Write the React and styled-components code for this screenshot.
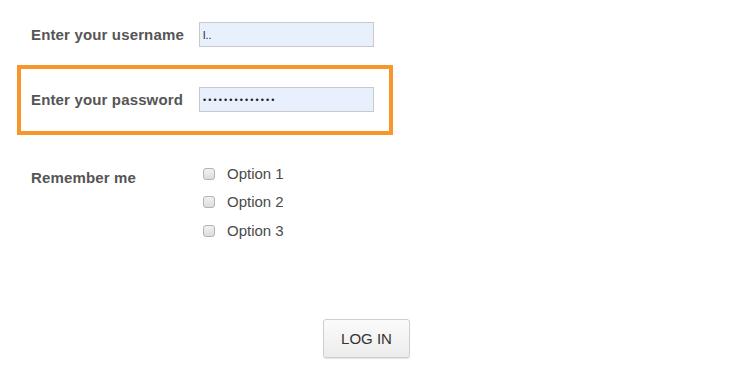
import React from 'react';
import styled, { createGlobalStyle } from 'styled-components';

const GlobalStyle = createGlobalStyle`
  html, body {
    margin: 0;
    padding: 0;
    background: #fff;
    font-family: "Liberation Sans", Arial, Helvetica, sans-serif;
  }
`;

const Page = styled.form`
  width: 730px;
  height: 388px;
  box-sizing: border-box;
  padding: 22px 0 0 17px;
  display: flex;
  flex-direction: column;
`;

const Field = styled.div`
  display: grid;
  grid-template-columns: 168px 175px;
  align-items: center;
  box-sizing: border-box;
  width: ${p => (p.highlight ? '376px' : 'auto')};
  padding: ${p => (p.highlight ? '18px 10px 19px' : '0 0 0 14px')};
  margin-top: ${p => (p.highlight ? '18px' : '0')};
  border: ${p => (p.highlight ? '4px solid #f8962c' : 'none')};
`;

const Label = styled.label`
  font-size: 15px;
  font-weight: bold;
  letter-spacing: 0.15px;
  color: #555;
  white-space: nowrap;
`;

const TextInput = styled.input`
  box-sizing: border-box;
  width: 175px;
  height: 25px;
  margin: 0;
  padding: 0 3px;
  border: 1px solid #c9c9c9;
  border-radius: 0;
  background: #e8f0fe;
  color: #222;
  font-family: "Liberation Sans", Arial, sans-serif;
  font-size: ${p => (p.type === 'password' ? '9px' : '11px')};
  letter-spacing: ${p => (p.type === 'password' ? '2.1px' : '0')};
  outline: none;
`;

const OptionsRow = styled.div`
  display: grid;
  grid-template-columns: 168px auto;
  align-items: start;
  padding-left: 14px;
  margin-top: 24px;
`;

const RememberLabel = styled(Label)`
  padding-top: 10px;
`;

const OptionList = styled.div`
  display: flex;
  flex-direction: column;
  padding-left: 4px;
`;

const Option = styled.label`
  display: flex;
  align-items: center;
  height: 28.5px;
  font-size: 15px;
  color: #4a4a4a;
`;

const Check = styled.input`
  appearance: none;
  box-sizing: border-box;
  width: 12px;
  height: 12px;
  margin: 1px 12px 0 0;
  border: 1px solid #b3b3b3;
  border-radius: 3px;
  background: linear-gradient(#f2f2f2, #dcdcdc);
`;

const ButtonBar = styled.div`
  display: flex;
  justify-content: center;
  padding-right: 14px;
  margin-top: 74px;
`;

const LoginButton = styled.button`
  box-sizing: border-box;
  width: 87px;
  height: 39px;
  border: 1px solid #cfcfcf;
  border-radius: 3px;
  background: linear-gradient(#fbfbfb, #ececec);
  box-shadow: 0 1px 1px rgba(0, 0, 0, 0.12);
  font-family: "Liberation Sans", Arial, sans-serif;
  font-size: 15px;
  color: #333;
  padding: 0;
`;

export default function App() {
  return (
    <>
      <GlobalStyle />
      <Page onSubmit={e => e.preventDefault()}>
        <Field>
          <Label>Enter your username</Label>
          <TextInput type="text" defaultValue="l.." />
        </Field>
        <Field highlight>
          <Label>Enter your password</Label>
          <TextInput type="password" defaultValue="passwordpasswo" />
        </Field>
        <OptionsRow>
          <RememberLabel>Remember me</RememberLabel>
          <OptionList>
            {['Option 1', 'Option 2', 'Option 3'].map(o => (
              <Option key={o}>
                <Check type="checkbox" />
                {o}
              </Option>
            ))}
          </OptionList>
        </OptionsRow>
        <ButtonBar>
          <LoginButton type="submit">LOG IN</LoginButton>
        </ButtonBar>
      </Page>
    </>
  );
}
